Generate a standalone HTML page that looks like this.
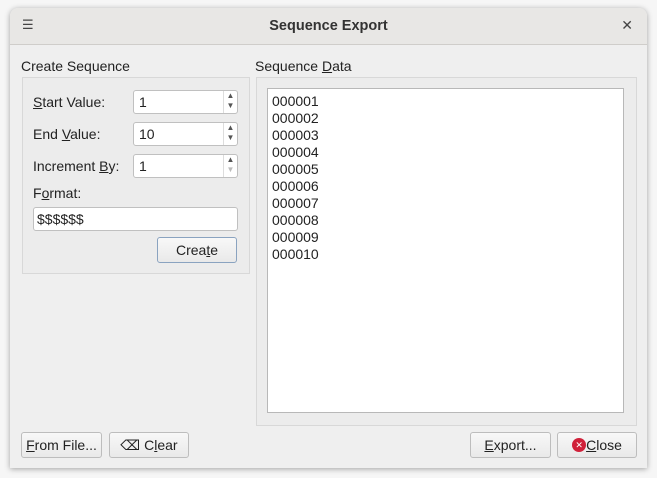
<!DOCTYPE html><html><head><style>
body{margin:0;width:657px;height:478px;background:#f6f6f6;font-family:"Liberation Sans","DejaVu Sans",sans-serif;font-size:14px;color:#222;position:relative;overflow:hidden}
.win{position:absolute;left:10px;top:8px;width:637px;height:460px;background:#efefef;border-radius:8px 8px 0 0;box-shadow:0 1px 6px rgba(0,0,0,.35)}
.tb{position:absolute;left:0;top:0;width:637px;height:36px;background:#e8e7e5;border-radius:8px 8px 0 0;border-bottom:1px solid #cfcdca}
.t{position:absolute;left:0;right:0;top:10px;text-align:center;font-weight:bold;font-size:14.5px;color:#333}
.a{position:absolute;white-space:nowrap}
.grp{position:absolute;border:1px solid #d8d8d8;background:#ececec}
.in{position:absolute;background:#fff;border:1px solid #c0c0c0;border-radius:3px;height:22px}
.in span{position:absolute;left:5px;top:3px}
.sp{position:absolute;right:0;top:0;width:13px;height:22px;border-left:1px solid #ddd;font-size:8px;color:#555;text-align:center;line-height:10px}
.btn{position:absolute;height:24px;border:1px solid #bdbdbd;border-radius:3px;background:linear-gradient(#f8f8f8,#e9e9e9);text-align:center;line-height:24px;font-size:14px}
u{text-decoration:underline}
.ta{position:absolute;left:257px;top:80px;width:357px;height:325px;background:#fff;border:1px solid #b8b8b8;line-height:17px;padding:4px 4px;box-sizing:border-box;font-size:14px}
</style></head><body>
<div class="win">
<div class="tb"><div class="a" style="left:12px;top:9px;font-size:13px;color:#444">☰</div><div class="t">Sequence Export</div><div class="a" style="right:14px;top:9px;font-size:14px;color:#444">✕</div></div>
<div class="a" style="left:11px;top:50px">Create Sequence</div>
<div class="a" style="left:245px;top:50px">Sequence <u>D</u>ata</div>
<div class="grp" style="left:12px;top:69px;width:226px;height:195px"></div>
<div class="grp" style="left:246px;top:69px;width:379px;height:347px"></div>
<div class="a" style="left:23px;top:86px"><u>S</u>tart Value:</div>
<div class="in" style="left:123px;top:82px;width:103px"><span>1</span><div class="sp">▲<br>▼</div></div>
<div class="a" style="left:23px;top:118px">End <u>V</u>alue:</div>
<div class="in" style="left:123px;top:114px;width:103px"><span>10</span><div class="sp">▲<br>▼</div></div>
<div class="a" style="left:23px;top:150px">Increment <u>B</u>y:</div>
<div class="in" style="left:123px;top:146px;width:103px"><span>1</span><div class="sp">▲<br><span style="position:static;color:#bbb">▼</span></div></div>
<div class="a" style="left:23px;top:177px">F<u>o</u>rmat:</div>
<div class="in" style="left:23px;top:199px;width:203px"><span style="left:3px">$$$$$$</span></div>
<div class="btn" style="left:147px;top:229px;width:78px;border-color:#8aa3c0">Crea<u>t</u>e</div>
<div class="ta">000001<br>000002<br>000003<br>000004<br>000005<br>000006<br>000007<br>000008<br>000009<br>000010</div>
<div class="btn" style="left:11px;top:424px;width:79px"><u>F</u>rom File...</div>
<div class="btn" style="left:99px;top:424px;width:78px">⌫ C<u>l</u>ear</div>
<div class="btn" style="left:460px;top:424px;width:79px"><u>E</u>xport...</div>
<div class="btn" style="left:547px;top:424px;width:78px"><span style="display:inline-block;width:14px;height:14px;border-radius:50%;background:#d0213a;color:#fff;font-size:9px;line-height:14px;vertical-align:middle;font-weight:bold;margin-top:-3px">✕</span><u>C</u>lose</div>
</div>
</body></html>
